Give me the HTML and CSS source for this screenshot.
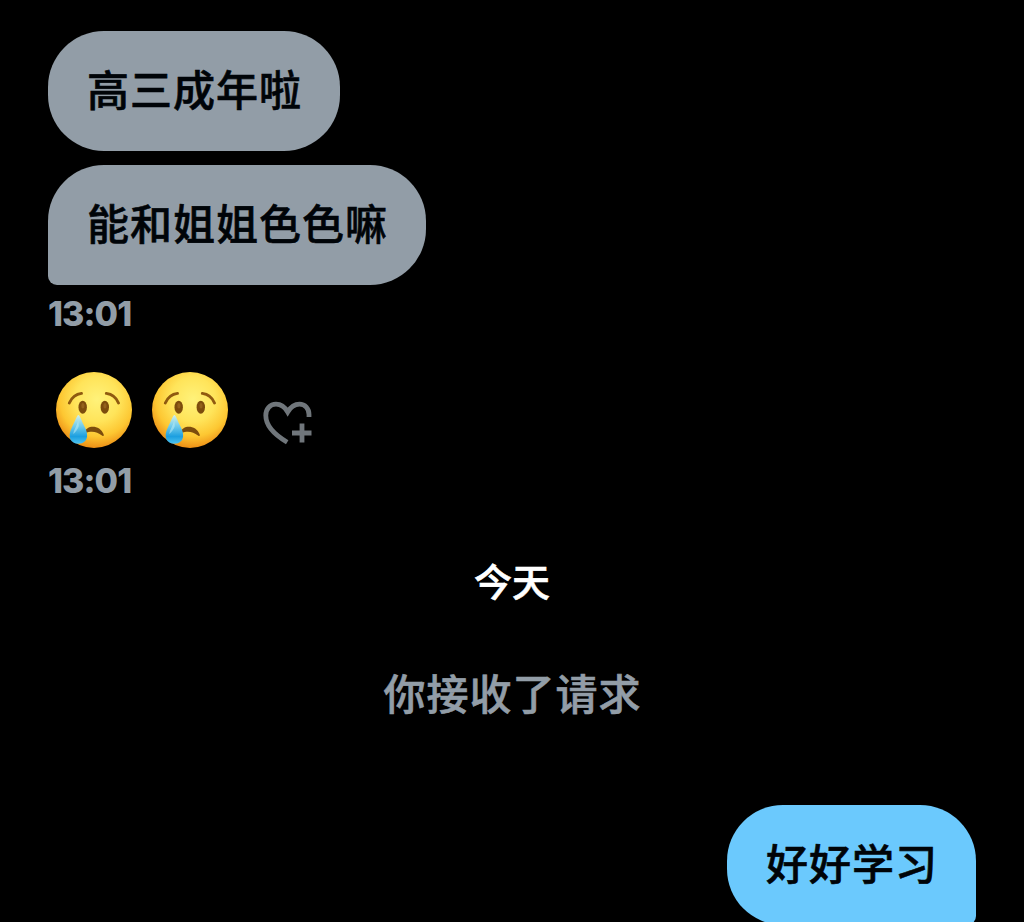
FILE: index.html
```html
<!DOCTYPE html>
<html lang="zh-CN">
<head>
    <meta charset="UTF-8">
    <meta name="viewport" content="width=device-width, initial-scale=1.0">
    <title>聊天</title>
    <link rel="stylesheet" href="styles.css">
</head>
<body>
    <!-- Shared crying face -->
    <svg class="defs" width="0" height="0">
        <defs>
            <radialGradient id="faceFill" cx="54%" cy="36%" r="65%">
                <stop offset="0" stop-color="#fff27a"/>
                <stop offset="0.45" stop-color="#ffe45a"/>
                <stop offset="0.75" stop-color="#fdc732"/>
                <stop offset="1" stop-color="#ec8c14"/>
            </radialGradient>
            <linearGradient id="tearFill" x1="0" y1="0" x2="0" y2="1">
                <stop offset="0" stop-color="#d5f0e8"/>
                <stop offset="0.35" stop-color="#7bd0ec"/>
                <stop offset="0.75" stop-color="#1c9fe0"/>
                <stop offset="1" stop-color="#4cc3f0"/>
            </linearGradient>
            <symbol id="cry" viewBox="0 0 76 76">
                <circle cx="38" cy="38" r="38" fill="url(#faceFill)"/>
                <path d="M13.3 31 Q17 22.5 25.5 21.4 M50.3 21.4 Q59 22.5 62.5 31" fill="none" stroke="#8f5a10" stroke-width="2.9" stroke-linecap="round"/>
                <ellipse cx="26.7" cy="35.2" rx="4.2" ry="6.5" fill="#7c4c0d"/>
                <ellipse cx="48.8" cy="35.2" rx="4.2" ry="6.5" fill="#7c4c0d"/>
                <ellipse cx="26.9" cy="33.8" rx="1.6" ry="2.8" fill="#93611c"/>
                <ellipse cx="49" cy="33.8" rx="1.6" ry="2.8" fill="#93611c"/>
                <path d="M29 60 C30 53 44 52 47.7 62.5 Q48.2 65 46 63.6 C41 59.5 36 58.5 29 61Z" fill="#7c4c0d"/>
                <path d="M22.4 43 C23.8 43 25.3 48.5 28.7 55 C34 65 30 71.7 22.5 71.7 C14.5 71.7 11 65 15.8 55.5 C19.2 49 21 43 22.4 43Z" fill="url(#tearFill)"/>
                <path d="M22.2 48 C21.5 53 17.5 58 17.3 62 C19 61 22 57 22.8 54Z" fill="#c4f0f7" opacity="0.5"/>
            </symbol>
        </defs>
    </svg>

    <main class="chat">
        <div class="bubble received">高三成年啦</div>
        <div class="bubble received last">能和姐姐色色嘛</div>
        <time class="time">13:01</time>

        <div class="emoji-row">
            <svg class="emoji" role="img" aria-label="哭脸"><use href="#cry"/></svg>
            <svg class="emoji" role="img" aria-label="哭脸"><use href="#cry"/></svg>
            <svg class="react" viewBox="0 0 50 44" role="img" aria-label="添加回应">
                <path d="M46 16 V13.5 C46 7.5 42 3.2 36.5 3.2 C31 3.2 27.5 6.3 24.7 11 C22 6.3 18.5 3.2 13 3.2 C7 3.2 2.8 8 2.8 14.5 C2.8 25.5 12 34 24.2 41.2"/>
                <path d="M39 22.5 V41.5 M29 32 H48.5"/>
            </svg>
        </div>
        <time class="time">13:01</time>

        <div class="day">今天</div>
        <div class="notice">你接收了请求</div>

        <div class="bubble sent">好好学习</div>
    </main>
</body>
</html>
```
FILE: styles.css
```css
* {
    box-sizing: border-box;
}
body {
    margin: 0;
    height: 922px;
    overflow: hidden;
    background-color: #000;
    font-family: Inter, "Noto Sans CJK SC", sans-serif;
}
.defs {
    position: absolute;
}
.chat {
    display: flex;
    flex-direction: column;
    align-items: flex-start;
    padding: 31px 48px 0;
}

/* Message bubbles */
.bubble {
    flex: none;
    height: 120px;
    padding: 0 38px 0 39px;
    border-radius: 56px;
    color: #000408;
    font-family: "Noto Sans CJK SC", sans-serif;
    font-size: 42px;
    font-weight: 500;
    letter-spacing: 1px;
    line-height: 114px;
    white-space: nowrap;
    -webkit-text-stroke: 0.6px currentColor;
}
.received {
    background-color: #929da7;
}
.last {
    margin-top: 14px;
    border-bottom-left-radius: 9px;
}
.sent {
    align-self: flex-end;
    margin-top: 83px;
    border-bottom-right-radius: 9px;
    background-color: #6bc9fd;
}
.time {
    height: 40px;
    margin-top: 9px;
    color: #929da7;
    font-size: 34px;
    font-weight: 800;
    letter-spacing: -0.9px;
    line-height: 40px;
}

/* Emoji message with the reaction button */
.emoji-row {
    display: flex;
    height: 76px;
    margin: 38px 0 4px 8px;
}
.emoji {
    width: 76px;
    height: 76px;
    margin-right: 19.5px;
}
.react {
    width: 50px;
    height: 44px;
    margin: 29px 0 0 16px;
    fill: none;
    stroke: #70767b;
    stroke-width: 4.8;
}

/* Date and request notice */
.day,
.notice {
    align-self: center;
    font-family: "Noto Sans CJK SC", sans-serif;
    font-weight: 500;
    -webkit-text-stroke: 0.6px currentColor;
}
.day {
    height: 50px;
    margin-top: 54px;
    color: #fff;
    font-size: 38px;
    line-height: 50px;
}
.notice {
    height: 60px;
    margin-top: 57px;
    padding-left: 1px;
    color: #929da7;
    font-size: 42px;
    letter-spacing: 1px;
    line-height: 60px;
}
```
